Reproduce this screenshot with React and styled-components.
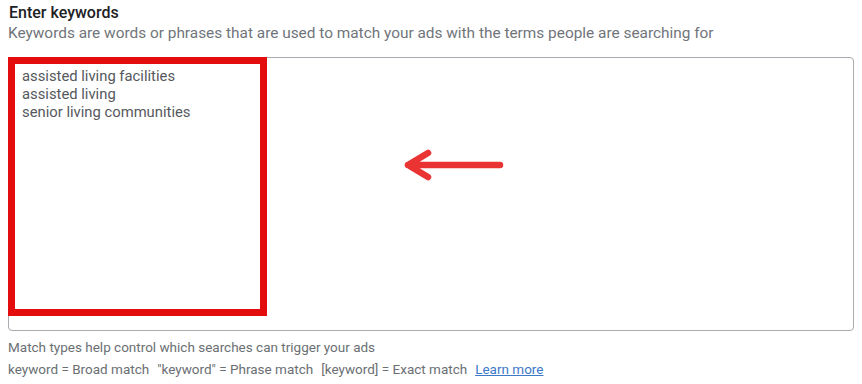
import React from 'react';
import styled, { createGlobalStyle } from 'styled-components';

const Global = createGlobalStyle`
  html, body { margin: 0; padding: 0; background: #fff; }
  body { font-family: Roboto, "Liberation Sans", Arial, sans-serif; }
`

const Page = styled.div`
  width: 862px;
  height: 384px;
  padding: 3px 8px 0 8px;
  box-sizing: border-box;
  display: flex;
  flex-direction: column;
`

const Title = styled.div`
  font-size: 16px;
  font-weight: 500;
  color: #202124;
  line-height: 19px;
  padding-left: 1px;
`

const Subtitle = styled.div`
  font-size: 15.4px;
  color: #70757a;
  line-height: 20px;
  margin-top: 1px;
`

const Field = styled.div`
  position: relative;
  margin-top: 14px;
  width: 846px;
  height: 274px;
  border: 1px solid #a8abaf;
  border-radius: 4px;
  box-sizing: border-box;
`

const Keywords = styled.div`
  padding: 9px 0 0 13px;
  font-size: 14.8px;
  line-height: 18px;
  color: #55585c;
`

const Highlight = styled.div`
  position: absolute;
  left: -1px;
  top: -1px;
  width: 259px;
  height: 259px;
  border: 7px solid #e40d0d;
  box-sizing: border-box;
  filter: blur(0.3px);
`

const Arrow = styled.svg`
  position: absolute;
  left: 391px;
  top: 91px;
`

const Help = styled.div`
  margin-top: 5px;
  font-size: 13.5px;
  line-height: 22px;
  color: #6b6f73;
`

const Link = styled.a`
  color: #3d78c9;
  text-decoration: underline;
  margin-left: 8px;
`

const Gap = styled.span`
  display: inline-block;
  width: ${props => props.w}px;
`

export default function App() {
  return (
    <Page>
      <Global />
      <Title>Enter keywords</Title>
      <Subtitle>Keywords are words or phrases that are used to match your ads with the terms people are searching for</Subtitle>
      <Field>
        <Keywords>
          <div>assisted living facilities</div>
          <div>assisted living</div>
          <div>senior living communities</div>
        </Keywords>
        <Highlight />
        <Arrow width="110" height="40" viewBox="0 0 110 40">
          <path d="M100 16 H8 M28 4 L8 16 L28 28" fill="none" stroke="#ea3434" strokeWidth="6.5" strokeLinecap="round" strokeLinejoin="round" />
        </Arrow>
      </Field>
      <Help>
        <div>Match types help control which searches can trigger your ads</div>
        <div>
          keyword = Broad match<Gap w={8} />"keyword" = Phrase match<Gap w={8} />[keyword] = Exact match
          <Link href="#">Learn more</Link>
        </div>
      </Help>
    </Page>
  );
}
